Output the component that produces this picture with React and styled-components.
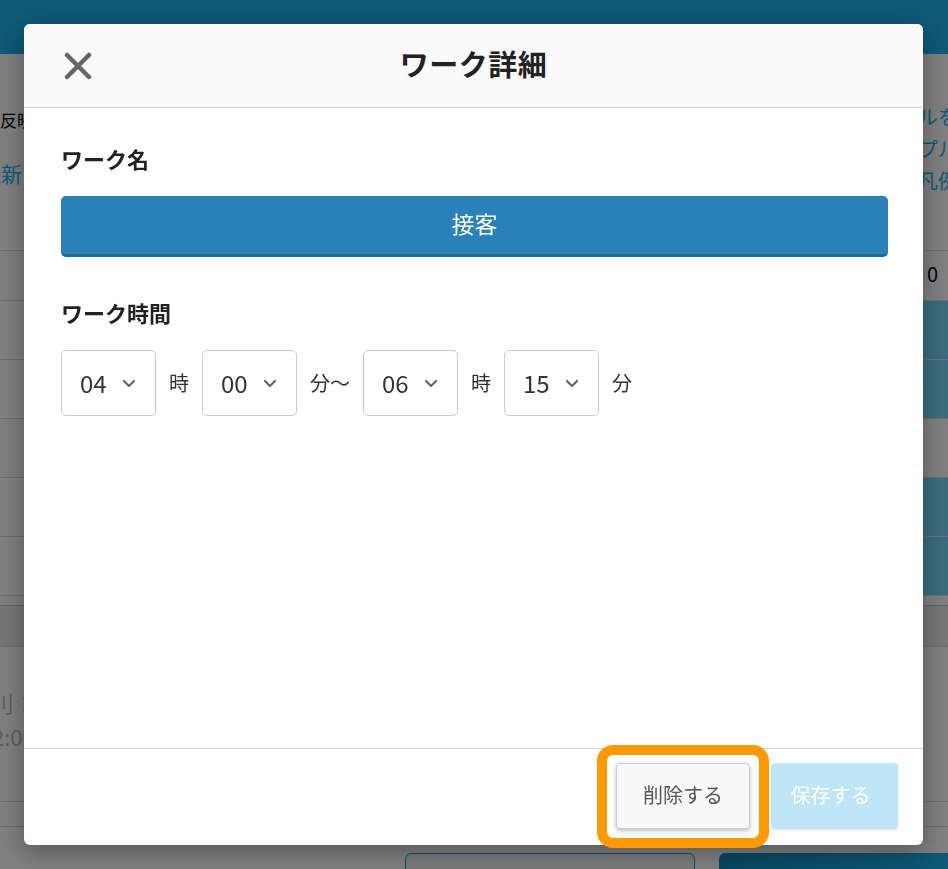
import styled, { createGlobalStyle } from "styled-components";

const GlobalStyle = createGlobalStyle`
  html, body {
    margin: 0;
    padding: 0;
    overflow: hidden;
  }
  body {
    font-family: "Noto Sans CJK JP", "Noto Sans", sans-serif;
    color: #222;
  }
  * {
    box-sizing: border-box;
  }
`;

const hours = [
  { value: "04", unit: "時" },
  { value: "00", unit: "分〜" },
  { value: "06", unit: "時" },
  { value: "15", unit: "分" },
];

const tableRows = [true, true, false, true, true];

function Chevron() {
  return (
    <svg width="14" height="9" viewBox="0 0 14 9">
      <polyline
        points="2,2 7,7 12,2"
        fill="none"
        stroke="#666"
        strokeWidth="2.2"
        strokeLinecap="round"
        strokeLinejoin="round"
      />
    </svg>
  );
}

function CloseIcon() {
  return (
    <svg width="28" height="28" viewBox="0 0 28 28">
      <path
        d="M3 3 L25 25 M25 3 L3 25"
        stroke="#666"
        strokeWidth="4.5"
        strokeLinecap="round"
      />
    </svg>
  );
}

function App() {
  return (
    <>
      <GlobalStyle />
      <Page>
        <TopBar />
        <InfoRow>
          <InfoLeft>
            <Note>反映されます</Note>
            <Link>更新する</Link>
          </InfoLeft>
          <InfoRight>
            <Link small>ルを</Link>
            <Link small>プル</Link>
            <Link small>凡例</Link>
          </InfoRight>
        </InfoRow>
        <Table>
          <TableRow>
            <Cell />
            <EdgeCell>0</EdgeCell>
          </TableRow>
          {tableRows.map((filled, i) => (
            <TableRow key={i}>
              <Cell />
              <EdgeCell filled={filled} />
            </TableRow>
          ))}
          <ThinRow />
        </Table>
        <Band />
        <Summary>
          <SummaryText>刂：</SummaryText>
          <SummaryText>2:00</SummaryText>
        </Summary>
        <SummaryLine />
        <PageFooter>
          <OutlineAction />
          <FillAction />
        </PageFooter>
      </Page>

      <Overlay>
        <Modal>
          <ModalHeader>
            <CloseButton>
              <CloseIcon />
            </CloseButton>
            <Title>ワーク詳細</Title>
          </ModalHeader>

          <ModalBody>
            <Label>ワーク名</Label>
            <WorkButton>接客</WorkButton>

            <Label spaced>ワーク時間</Label>
            <TimeRow>
              {hours.map((h, i) => (
                <TimeGroup key={i}>
                  <Select>
                    <span>{h.value}</span>
                    <Chevron />
                  </Select>
                  <Unit>{h.unit}</Unit>
                </TimeGroup>
              ))}
            </TimeRow>
          </ModalBody>

          <ModalFooter>
            <Highlight>
              <DeleteButton>削除する</DeleteButton>
            </Highlight>
            <SaveButton>保存する</SaveButton>
          </ModalFooter>
        </Modal>
      </Overlay>
    </>
  );
}

export default App;

/* ---------- background page ---------- */

const Page = styled.div`
  width: 100vw;
  height: 100vh;
  background: #fff;
  display: flex;
  flex-direction: column;

  & > * {
    flex-shrink: 0;
  }
`;

const TopBar = styled.div`
  height: 54px;
  background: #1db4ee;
`;

const InfoRow = styled.div`
  height: 196px;
  display: grid;
  grid-template-columns: 1fr 23px;
`;

const InfoLeft = styled.div`
  display: flex;
  flex-direction: column;
  padding-top: 53px;
  gap: 26px;
`;

const InfoRight = styled.div`
  display: flex;
  flex-direction: column;
  padding-top: 49px;
  gap: 4px;
  white-space: nowrap;
`;

const Note = styled.div`
  font-size: 17px;
  color: #000;
`;

const Link = styled.div`
  font-size: ${(p) => (p.small ? "20px" : "21px")};
  line-height: ${(p) => (p.small ? "28px" : "30px")};
  color: #1db4ee;
  margin-left: ${(p) => (p.small ? "-7px" : "-20px")};
`;

const Table = styled.div`
  border-top: 1px solid #ddd;
`;

const TableRow = styled.div`
  display: grid;
  grid-template-columns: 1fr 25px;
  height: 59px;
  border-bottom: 1px solid #ddd;

  &:first-child {
    height: 50px;
  }
`;

const Cell = styled.div``;

const EdgeCell = styled.div`
  background: ${(p) => (p.filled ? "#76d8fa" : "transparent")};
  font-size: 20px;
  line-height: 46px;
  padding-left: 4px;
  color: #000;
`;

const ThinRow = styled.div`
  height: 10px;
  border-bottom: 1px solid #ccc;
`;

const Band = styled.div`
  height: 40px;
  background: #ececec;
`;

const Summary = styled.div`
  height: 155px;
  display: flex;
  flex-direction: column;
  padding-top: 38px;
  border-top: 1px solid #ddd;
`;

const SummaryText = styled.div`
  font-size: 22px;
  line-height: 34px;
  color: #bbb;
  margin-left: -8px;
`;

const SummaryLine = styled.div`
  height: 26px;
  border-top: 1px solid #ddd;
  border-bottom: 1px solid #ddd;
`;

const PageFooter = styled.div`
  display: flex;
  gap: 24px;
  padding: 26px 0 0 405px;
`;

const OutlineAction = styled.div`
  width: 290px;
  height: 50px;
  border: 1px solid #1a9ed4;
  border-radius: 6px;
  background: #f4f4f4;
`;

const FillAction = styled.div`
  flex: 1;
  height: 50px;
  border-radius: 6px 0 0 6px;
  background: linear-gradient(90deg, #0f8cbc, #1ab2ea);
`;

/* ---------- modal ---------- */

const Overlay = styled.div`
  position: fixed;
  inset: 0;
  background: rgba(0, 0, 0, 0.5);
  padding: 24px 25px 24px 24px;
  display: flex;
`;

const Modal = styled.div`
  flex: 1;
  background: #fff;
  border-radius: 6px;
  display: flex;
  flex-direction: column;
  box-shadow: 0 6px 24px rgba(0, 0, 0, 0.35);
`;

const ModalHeader = styled.div`
  height: 84px;
  flex-shrink: 0;
  background: #fafafa;
  border-bottom: 1px solid #cfcfcf;
  border-radius: 6px 6px 0 0;
  display: flex;
  align-items: center;
  justify-content: center;
  padding-bottom: 5px;
  position: relative;
`;

const CloseButton = styled.div`
  position: absolute;
  left: 40px;
  top: 28px;
  width: 28px;
  height: 28px;
  display: flex;
`;

const Title = styled.h1`
  margin: 0;
  font-size: 29px;
  font-weight: 700;
  color: #222;
  letter-spacing: 0.5px;
`;

const ModalBody = styled.div`
  flex: 1;
  display: flex;
  flex-direction: column;
  padding: 35px 35px 0 37px;
`;

const Label = styled.div`
  font-size: 22px;
  font-weight: 700;
  line-height: 30px;
  color: #222;
  margin-top: ${(p) => (p.spaced ? "40px" : "0")};
`;

const WorkButton = styled.div`
  margin-top: 23px;
  height: 61px;
  background: #2a80b9;
  border-bottom: 3px solid #216796;
  border-radius: 5px;
  color: #fff;
  font-size: 23px;
  display: flex;
  align-items: center;
  justify-content: center;
  padding-bottom: 4px;
`;

const TimeRow = styled.div`
  margin-top: 23px;
  display: flex;
  gap: 13px;
`;

const TimeGroup = styled.div`
  display: flex;
  align-items: center;
  gap: 13px;
`;

const Select = styled.div`
  width: 95px;
  height: 66px;
  border: 1px solid #ccc;
  border-radius: 5px;
  display: flex;
  align-items: center;
  justify-content: space-between;
  padding: 0 19px 2px 18px;
  font-size: 24px;
  color: #333;

  svg {
    margin-top: 3px;
  }
`;

const Unit = styled.span`
  font-size: 20px;
  color: #333;
  padding-bottom: 2px;
`;

const ModalFooter = styled.div`
  height: 97px;
  flex-shrink: 0;
  border-top: 1px solid #cfcfcf;
  display: flex;
  align-items: center;
  justify-content: flex-end;
  gap: 21px;
  padding: 0 25px 2px 0;
`;

const Highlight = styled.div`
  position: relative;

  &::after {
    content: "";
    position: absolute;
    top: -18px;
    left: -19px;
    right: -19px;
    bottom: -19px;
    border: 10px solid #ff9900;
    border-radius: 16px;
    pointer-events: none;
  }
`;

const FooterButton = styled.button`
  height: 66px;
  border-radius: 4px;
  font-family: inherit;
  font-size: 20px;
  padding: 0 0 3px;
  cursor: pointer;
`;

const DeleteButton = styled(FooterButton)`
  width: 134px;
  background: #f8f8f8;
  border: 1px solid #ccc;
  color: #555;
  box-shadow: 0 2px 4px rgba(0, 0, 0, 0.25);
`;

const SaveButton = styled(FooterButton)`
  width: 127px;
  background: #bee6f6;
  border: none;
  color: #fff;
  padding-right: 8px;
  box-shadow: 0 1px 3px rgba(0, 0, 0, 0.12);
`;
